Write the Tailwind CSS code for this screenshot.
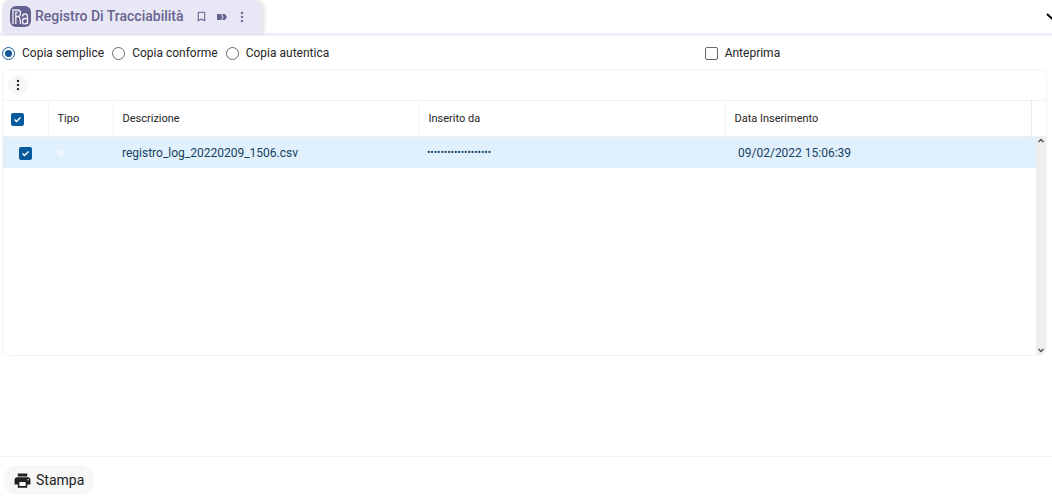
<!DOCTYPE html>
<html lang="it">
<head>
<meta charset="utf-8">
<meta name="viewport" content="width=device-width, initial-scale=1">
<title>Registro Di Tracciabilità</title>
<script src="https://cdn.jsdelivr.net/npm/@tailwindcss/browser@4"></script>
</head>
<body class="flex min-h-screen flex-col overflow-x-hidden bg-white font-['Roboto',sans-serif] text-[12px] text-[#252525]">
  <header class="flex items-center justify-between border-b-3 border-[#efeefb]">
    <div class="ml-0.5 flex h-[33px] items-center rounded-t-lg bg-[#e8e7f5] pr-3 pl-2 text-[#67638f] shadow-[2px_0_4px_rgba(0,0,0,0.14)]">
      <svg class="size-[21px]" viewBox="0 0 21 21" fill="none" aria-hidden="true">
        <rect width="21" height="21" rx="6" fill="#65618e"/>
        <g stroke="#eeedf8" stroke-width="1.300">
          <path d="M3 18V4h4.500q3 0 3 3.200 0 2.600-2 3.300 2 .8 2 7.500M5.800 18v-7.500h2.700M5.800 10.500V6.500h1.700"/>
          <path d="M12.500 10.500q0-2.500 2.500-2.500t2.500 2.500V18M17.500 12.500H15q-2.500 0-2.500 2.700t2.200 2.700q2.800 0 2.800-2.700"/>
        </g>
      </svg>
      <h1 class="ml-1 text-[14px] font-medium whitespace-nowrap">Registro Di Tracciabilità</h1>
      <div class="ml-auto flex items-center gap-0.5 pl-2.5">
        <button aria-label="Segnalibro" class="flex size-4 items-center justify-center">
          <svg class="size-[13px]" viewBox="0 0 24 24" fill="currentColor"><path d="M17 3H7c-1.100 0-2 .9-2 2v16l7-3 7 3V5c0-1.100-.9-2-2-2zm0 15-5-2.180L7 18V5h10v13z"/></svg>
        </button>
        <button aria-label="Etichette" class="flex h-4 w-5 items-center justify-center">
          <svg class="h-2 w-3" viewBox="0 0 12 8" fill="currentColor"><path d="M1 1h4l1.500 3L5 7H1z"/><path d="M6 1h3l2 3-2 3H6l1.500-3z"/></svg>
        </button>
        <button aria-label="Altre opzioni" class="flex size-4 items-center justify-center">
          <svg class="size-[14px]" viewBox="0 0 24 24" fill="currentColor"><circle cx="12" cy="5" r="2"/><circle cx="12" cy="12" r="2"/><circle cx="12" cy="19" r="2"/></svg>
        </button>
      </div>
    </div>
    <button aria-label="Espandi" class="-mr-[7px] shrink-0 text-black">
      <svg class="h-[8px] w-[13px]" viewBox="0 0 13 8" fill="none" stroke="currentColor" stroke-width="2"><path d="m1 1 5.500 5L12 1"/></svg>
    </button>
  </header>

  <main class="mr-[5px] ml-0.5">
    <form class="flex h-[33px] items-center pt-px">
      <fieldset class="flex w-2/3 items-center gap-2">
        <label class="flex items-center gap-[7px] whitespace-nowrap"><input type="radio" name="copia" checked class="size-[13px] appearance-none rounded-full border border-[#14589a] bg-[#14589a] bg-clip-content p-[2px]">Copia semplice</label>
        <label class="flex items-center gap-[7px] whitespace-nowrap"><input type="radio" name="copia" class="size-[13px] appearance-none rounded-full border border-[#6b6b6b] checked:bg-[#14589a]">Copia conforme</label>
        <label class="flex items-center gap-[7px] whitespace-nowrap"><input type="radio" name="copia" class="size-[13px] appearance-none rounded-full border border-[#6b6b6b] checked:bg-[#14589a]">Copia autentica</label>
      </fieldset>
      <label class="ml-1.5 flex items-center gap-[7px]"><input type="checkbox" class="size-[13px] appearance-none rounded-xs border border-[#666] checked:bg-[#14589a]">Anteprima</label>
    </form>

    <section class="rounded-lg border border-[#f3f3f3]">
      <div class="flex h-[30px] items-center px-[5px]">
        <button aria-label="Menu tabella" class="flex size-5 items-center justify-center rounded-full bg-[#f7f7f7] text-[#202020]">
          <svg class="size-[14px]" viewBox="0 0 24 24" fill="currentColor"><circle cx="12" cy="5" r="2"/><circle cx="12" cy="12" r="2"/><circle cx="12" cy="19" r="2"/></svg>
        </button>
      </div>
      <div class="relative min-h-[255px]">
        <table class="w-full table-fixed border-collapse text-left">
          <colgroup><col class="w-[45px]"><col class="w-[65px]"><col><col><col><col class="w-[15px]"></colgroup>
          <thead class="text-[11px]">
            <tr class="h-[36px] border-y border-[#f3f3f3]">
              <th class="pt-0.5 pl-2 font-normal">
                <span class="relative block size-[13px]"><input type="checkbox" checked aria-label="Seleziona tutto" class="block size-[13px] appearance-none rounded-xs bg-[#075a9c]"><svg class="pointer-events-none absolute inset-0" viewBox="0 0 13 13" fill="none" stroke="white" stroke-width="1.400"><path d="m3.500 6.500 2 2 4-4"/></svg></span>
              </th>
              <th class="border-l border-[#f3f3f3] pt-0.5 pl-[9px] font-normal">Tipo</th>
              <th class="border-l border-[#f3f3f3] pt-0.5 pl-[9px] font-normal">Descrizione</th>
              <th class="border-l border-[#f3f3f3] pt-0.5 pl-[9px] font-normal">Inserito da</th>
              <th class="border-l border-[#f3f3f3] pt-0.5 pl-[9px] font-normal">Data Inserimento</th>
              <td class="border-l border-[#e8eaee]"></td>
            </tr>
          </thead>
          <tbody>
            <tr class="h-[31px] bg-[#e0f0fd] text-[12px] text-[#173f5f]">
              <td class="pt-0.5 pl-4">
                <span class="relative block size-[13px]"><input type="checkbox" checked aria-label="Seleziona registro_log_20220209_1506.csv" class="block size-[13px] appearance-none rounded-xs bg-[#075a9c]"><svg class="pointer-events-none absolute inset-0" viewBox="0 0 13 13" fill="none" stroke="white" stroke-width="1.400"><path d="m3.500 6.500 2 2 4-4"/></svg></span>
              </td>
              <td class="pt-0.5 pl-[9px]"><span class="block size-2 rounded-sm bg-[#edf6fe]"></span></td>
              <td class="pt-0.5 pl-[9px]">registro_log_20220209_1506.csv</td>
              <td class="pl-2 text-[10px]">•••••••••••••••••••</td>
              <td class="pt-0.5 pl-[13px]">09/02/2022 15:06:39</td>
              <td></td>
            </tr>
          </tbody>
        </table>
        <div class="absolute top-[36px] right-0 bottom-0 flex w-[10px] flex-col items-center justify-between rounded-br-lg bg-[#eeeeee] py-0.5 text-[#555]" aria-hidden="true">
          <svg class="h-[5px] w-[6px]" viewBox="0 0 6 5" fill="none" stroke="currentColor" stroke-width="1.500"><path d="m.5 4 2.500-2.500L5.500 4"/></svg>
          <svg class="h-[5px] w-[6px]" viewBox="0 0 6 5" fill="none" stroke="currentColor" stroke-width="1.500"><path d="m.5 1 2.500 2.500L5.500 1"/></svg>
        </div>
      </div>
    </section>
  </main>

  <footer class="mt-auto border-t border-[#f3f3f3] px-[3px] pt-2 pb-[5px]">
    <button class="flex h-[30px] items-center gap-1 rounded-full bg-[#f7f7f7] px-[10px] text-[14px] text-[#202020]">
      <svg class="size-[19px]" viewBox="0 0 24 24" fill="currentColor" aria-hidden="true"><path d="M19 8H5c-1.660 0-3 1.340-3 3v6h4v4h12v-4h4v-6c0-1.660-1.340-3-3-3zm-3 11H8v-5h8v5zm3-7c-.55 0-1-.45-1-1s.45-1 1-1 1 .45 1 1-.45 1-1 1zm-1-9H6v4h12V3z"/></svg>
      Stampa
    </button>
  </footer>
</body>
</html>
